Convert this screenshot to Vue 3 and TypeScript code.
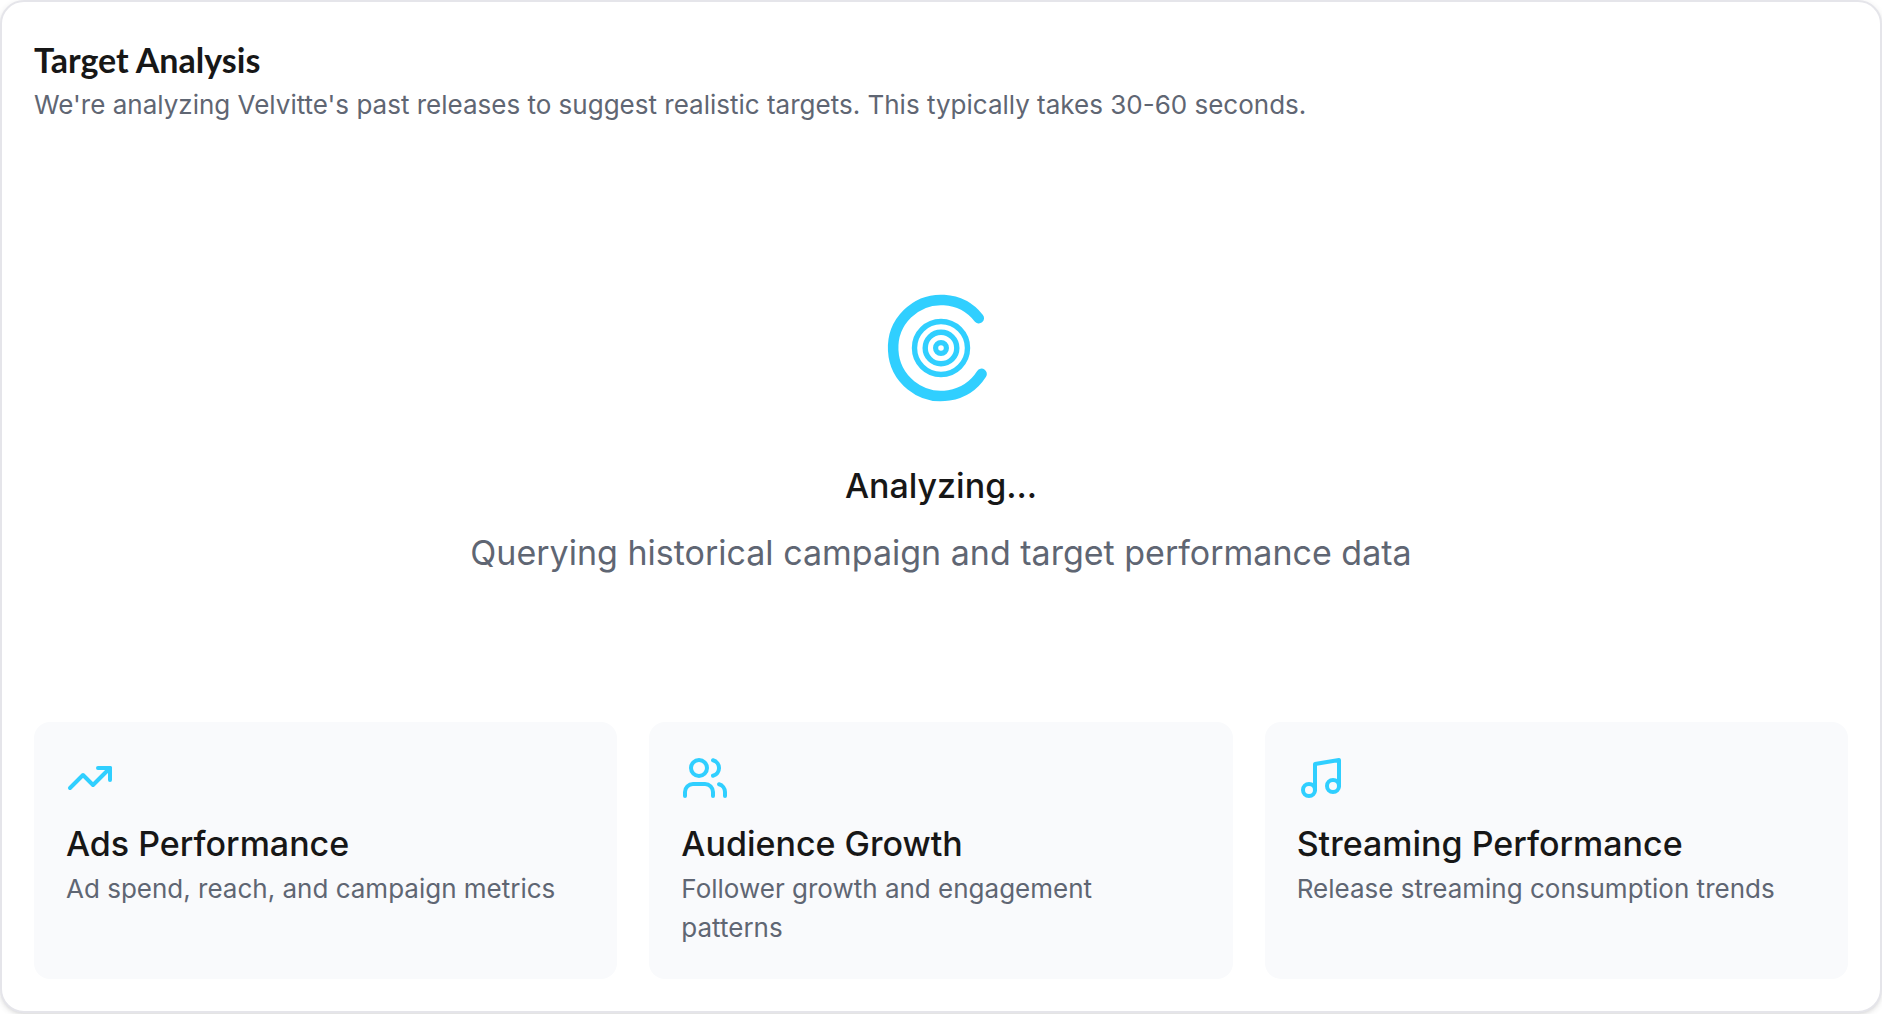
<script setup lang="ts">
interface Metric {
  icon: 'trend' | 'users' | 'music'
  title: string
  text: string
}

const metrics: Metric[] = [
  { icon: 'trend', title: 'Ads Performance', text: 'Ad spend, reach, and campaign metrics' },
  { icon: 'users', title: 'Audience Growth', text: 'Follower growth and engagement patterns' },
  { icon: 'music', title: 'Streaming Performance', text: 'Release streaming consumption trends' },
]
</script>

<template>
  <main class="card">
    <header>
      <h1 class="heading brand">Target Analysis</h1>
      <p class="text">
        We're analyzing Velvitte's past releases to suggest realistic targets. This typically takes 30-60 seconds.
      </p>
    </header>

    <section class="progress" role="status">
      <svg class="logo" viewBox="0 0 128 128" fill="none" stroke="currentColor" aria-hidden="true">
        <path d="M101.8 34.2A48 48 0 1 0 104.6 89.8" stroke-width="10.5" stroke-linecap="round" />
        <circle cx="64" cy="64" r="26.5" stroke-width="5.4" />
        <circle cx="64" cy="64" r="15.8" stroke-width="5.4" />
        <circle cx="64" cy="64" r="5.4" stroke-width="5.2" />
      </svg>
      <h2 class="heading">Analyzing...</h2>
      <p class="detail">Querying historical campaign and target performance data</p>
    </section>

    <ul class="metrics">
      <li v-for="metric in metrics" :key="metric.title" class="metric">
        <svg class="icon" viewBox="0 0 24 24" aria-hidden="true">
          <template v-if="metric.icon === 'trend'">
            <path d="M16 7h6v6" />
            <path d="m22 7-8.5 8.5-5-5L2 17" />
          </template>
          <template v-else-if="metric.icon === 'users'">
            <path d="M16 21v-2a4 4 0 0 0-4-4H6a4 4 0 0 0-4 4v2" />
            <circle cx="9" cy="7" r="4" />
            <path d="M22 21v-2a4 4 0 0 0-3-3.87" />
            <path d="M16 3.13a4 4 0 0 1 0 7.75" />
          </template>
          <template v-else>
            <path d="M9 18V5l12-2v13" />
            <circle cx="6" cy="18" r="3" />
            <circle cx="18" cy="16" r="3" />
          </template>
        </svg>
        <h3 class="heading">{{ metric.title }}</h3>
        <p class="text">{{ metric.text }}</p>
      </li>
    </ul>
  </main>
</template>

<style>
body {
  min-height: 100vh;
  margin: 0;
  background: #fff;
}
</style>

<style scoped>
.card {
  box-sizing: border-box;
  padding: 32px;
  border: 2px solid #e5e5ea;
  border-radius: 24px;
  background: #fff;
  box-shadow: 0 2px 6px rgba(0, 0, 0, 0.1), 0 2px 4px -2px rgba(0, 0, 0, 0.1);
  color: #171717;
  font-family: Inter, "Liberation Sans", sans-serif;
}

.heading,
.text,
.detail {
  margin: 0;
}

.heading {
  font-size: 34px;
  font-weight: 500;
  line-height: 51px;
}

.brand {
  font-family: Lato, Inter, sans-serif;
  font-weight: 700;
}

.text {
  color: #5f6673;
  font-size: 26px;
  line-height: 39px;
}

.progress {
  display: flex;
  flex-direction: column;
  align-items: center;
  padding: 160px 0 144px;
  text-align: center;
}

.logo {
  width: 128px;
  height: 128px;
  margin-bottom: 48px;
  color: #30cfff;
}

.detail {
  margin-top: 16px;
  color: #5f6673;
  font-size: 34px;
  line-height: 51px;
}

.metrics {
  display: grid;
  grid-template-columns: repeat(3, minmax(0, 1fr));
  gap: 32px;
  margin: 0;
  padding: 0;
  list-style: none;
}

.metric {
  padding: 32px;
  border-radius: 16px;
  background: #f9fafc;
}

.icon {
  display: block;
  width: 48px;
  height: 48px;
  margin-bottom: 16px;
  fill: none;
  stroke: #30cfff;
  stroke-width: 2;
  stroke-linecap: round;
  stroke-linejoin: round;
}
</style>
